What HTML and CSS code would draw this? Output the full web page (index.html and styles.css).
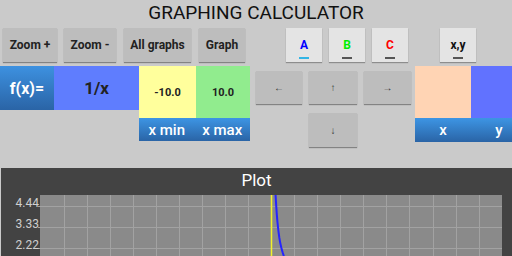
FILE: index.html
```html
<!DOCTYPE html>
<html lang="en">
<head>
<meta charset="UTF-8">
<title>Graphing Calculator</title>
<link rel="stylesheet" href="styles.css">
</head>
<body>

<h1 class="title">GRAPHING CALCULATOR</h1>

<div class="toolbar">
  <button class="btn btn-zoomin">Zoom +</button>
  <button class="btn btn-zoomout">Zoom -</button>
  <button class="btn btn-all">All graphs</button>
  <button class="btn btn-graph">Graph</button>
  <button class="tab tab-a active">A</button>
  <button class="tab tab-b">B</button>
  <button class="tab tab-c">C</button>
  <button class="tab tab-xy">x,y</button>
</div>

<div class="inputs">
  <div class="func">
    <div class="func-label">f(x)=</div>
    <div class="func-value">1/x</div>
  </div>

  <div class="range">
    <div class="range-values">
      <div class="range-min">-10.0</div>
      <div class="range-max">10.0</div>
    </div>
    <div class="bar">
      <span>x min</span>
      <span>x max</span>
    </div>
  </div>

  <div class="arrows">
    <button class="btn arrow">&#8592;</button>
    <button class="btn arrow">&#8593;</button>
    <button class="btn arrow">&#8594;</button>
    <button class="btn arrow arrow-down">&#8595;</button>
  </div>

  <div class="point">
    <div class="point-values">
      <div class="point-x"></div>
      <div class="point-y"></div>
    </div>
    <div class="bar">
      <span>x</span>
      <span>y</span>
    </div>
  </div>
</div>

<div class="plot">
  <div class="plot-title">Plot</div>
  <svg class="plot-area" width="511" height="61" viewBox="0 0 511 61">
    <rect x="39" y="0" width="462" height="61" fill="#8a8a8a"/>
    <g stroke="#a2a2a2" stroke-width="1">
      <line x1="37" y1="11.5" x2="501" y2="11.5"/>
      <line x1="37" y1="32.5" x2="501" y2="32.5"/>
      <line x1="37" y1="53.5" x2="501" y2="53.5"/>
      <line x1="63.5" y1="0" x2="63.5" y2="61"/>
      <line x1="86.5" y1="0" x2="86.5" y2="61"/>
      <line x1="109.5" y1="0" x2="109.5" y2="61"/>
      <line x1="132.5" y1="0" x2="132.5" y2="61"/>
      <line x1="155.5" y1="0" x2="155.5" y2="61"/>
      <line x1="178.5" y1="0" x2="178.5" y2="61"/>
      <line x1="201.5" y1="0" x2="201.5" y2="61"/>
      <line x1="224.5" y1="0" x2="224.5" y2="61"/>
      <line x1="247.5" y1="0" x2="247.5" y2="61"/>
      <line x1="293.5" y1="0" x2="293.5" y2="61"/>
      <line x1="316.5" y1="0" x2="316.5" y2="61"/>
      <line x1="339.5" y1="0" x2="339.5" y2="61"/>
      <line x1="362.5" y1="0" x2="362.5" y2="61"/>
      <line x1="385.5" y1="0" x2="385.5" y2="61"/>
      <line x1="408.5" y1="0" x2="408.5" y2="61"/>
      <line x1="432.5" y1="0" x2="432.5" y2="61"/>
      <line x1="455.5" y1="0" x2="455.5" y2="61"/>
      <line x1="478.5" y1="0" x2="478.5" y2="61"/>
    </g>
    <line x1="270.5" y1="0" x2="270.5" y2="61" stroke="#f2f22a" stroke-width="1.5"/>
    <polyline fill="none" stroke="#2424ff" stroke-width="2"
      points="274.4,-4.5 274.6,0.5 275.1,9.1 275.8,19.4 276.5,27.5 277.4,35.9 278.3,42.5 279.2,47.8 280.4,53 281.6,57.2 282.7,60.6 283.9,63.5"/>
    <g class="axis-labels">
      <text x="38" y="12" text-anchor="end">4.44</text>
      <text x="38" y="33" text-anchor="end">3.33</text>
      <text x="38" y="54" text-anchor="end">2.22</text>
    </g>
  </svg>
</div>

</body>
</html>
```

FILE: styles.css
```css
body {
  font-family: Roboto, "Liberation Sans", sans-serif;
  background-color: #cacaca;
  margin: 0;
  width: 512px;
  height: 256px;
  overflow: hidden;
}

button {
  font-family: inherit;
  border: none;
  padding: 0;
  cursor: pointer;
}

.title {
  margin: 0;
  height: 28px;
  line-height: 26px;
  font-size: 19px;
  font-weight: normal;
  text-align: center;
  color: #111;
}

/* top row of buttons */
.toolbar {
  display: flex;
  height: 34px;
  padding-left: 3px;
}

.btn {
  background-color: #bdbdbd;
  box-shadow: 0 1px 1px rgba(0, 0, 0, 0.35);
  font-size: 12px;
  font-weight: bold;
  color: #222;
}

.btn-zoomin { width: 54px; }
.btn-zoomout { width: 52px; margin-left: 7px; }
.btn-all { width: 67px; margin-left: 8px; }
.btn-graph { width: 46px; margin-left: 8px; }

.tab {
  width: 36px;
  margin-left: 7px;
  background-color: #e4e4e4;
  box-shadow: 0 1px 1px rgba(0, 0, 0, 0.3);
  font-size: 12px;
  font-weight: bold;
  position: relative;
}

.tab::after {
  content: "";
  position: absolute;
  left: 13px;
  bottom: 3px;
  width: 10px;
  height: 2px;
  background-color: #555;
}

.tab.active::after { background-color: #33b5e5; }

.tab-a { margin-left: 41px; color: #0000ff; }
.tab-b { color: #00ee00; }
.tab-c { color: #ff0000; }
.tab-xy { margin-left: 32px; color: #111; }

/* second row */
.inputs {
  display: flex;
  align-items: flex-start;
  margin-top: 4px;
}

.func {
  display: flex;
  height: 44px;
}

.func-label {
  width: 54px;
  background: linear-gradient(#3d91e0, #2a64a6);
  color: #fff;
  font-size: 16px;
  font-weight: bold;
  display: flex;
  align-items: center;
  justify-content: center;
}

.func-value {
  width: 85px;
  background-color: #5f7dfe;
  color: #222;
  font-size: 17px;
  font-weight: bold;
  display: flex;
  align-items: center;
  justify-content: center;
}

.range {
  width: 111px;
}

.range-values,
.point-values {
  display: flex;
  height: 52px;
}

.range-min,
.range-max {
  display: flex;
  align-items: center;
  justify-content: center;
  font-size: 11px;
  font-weight: bold;
  color: #222;
}

.range-min { width: 57px; background-color: #ffff9c; }
.range-max { width: 54px; background-color: #91ec8e; }

.bar {
  display: flex;
  height: 23px;
  background: linear-gradient(#3d95e4, #2a64a6);
  color: #fff;
  font-size: 15px;
  font-weight: 500;
}

.bar span {
  flex: 1;
  text-align: center;
  line-height: 24px;
}

.arrows {
  display: grid;
  grid-template-columns: 46px 48px 47px;
  grid-template-rows: 33px 34px;
  column-gap: 7px;
  row-gap: 9px;
  margin: 5px 0 0 6px;
}

.arrow {
  font-size: 10px;
  font-weight: normal;
  color: #333;
}

.arrow-down {
  grid-column: 2;
}

.point {
  width: 112px;
  margin-left: 4px;
  flex-shrink: 0;
}

.point-x { width: 56px; background-color: #ffd4b4; }
.point-y { width: 56px; background-color: #6172ff; }

.point .bar {
  height: 24px;
}

/* plot panel */
.plot {
  margin: 21px 0 0 1px;
  background-color: #434343;
}

.plot-title {
  height: 27px;
  line-height: 24px;
  text-align: center;
  color: #fff;
  font-size: 17px;
}

.plot-area {
  display: block;
}

.axis-labels {
  fill: #cfcfcf;
  font-family: Roboto, "Liberation Sans", sans-serif;
  font-size: 12px;
}
```
